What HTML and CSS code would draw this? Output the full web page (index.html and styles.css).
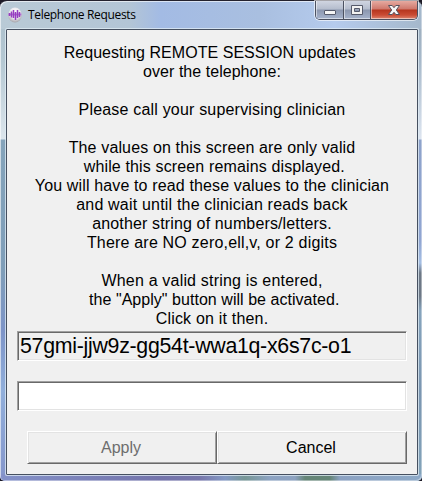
FILE: index.html
```
<!DOCTYPE html>
<html lang="en">
<head>
    <meta charset="UTF-8">
    <meta name="viewport" content="width=device-width, initial-scale=1.0">
    <title>Telephone Requests</title>
    <link rel="stylesheet" href="styles.css">
</head>
<body>
    <div class="window">
        <div class="title-bar">
            <svg class="app-icon" width="16" height="16" viewBox="0 0 16 16">
                <defs>
                    <radialGradient id="ball" cx="50%" cy="35%" r="65%">
                        <stop offset="0" stop-color="#ffffff"/>
                        <stop offset="0.6" stop-color="#e9e6ec"/>
                        <stop offset="1" stop-color="#a3a2a8"/>
                    </radialGradient>
                </defs>
                <ellipse cx="8" cy="8" rx="6.8" ry="7.6" fill="url(#ball)"/>
                <path d="M1.500 7.500h13" stroke="#b77dd2" stroke-width="2"/>
                <path d="M2.500 6v3M4.500 4.500v6M6.500 3v8M8.500 5v8M10.500 3v8M12.500 5v5" fill="none" stroke="#963fc0" stroke-width="1.500"/>
            </svg>
            <span class="title">Telephone Requests</span>
            <div class="window-buttons">
                <button class="win-btn minimize" aria-label="Minimize">
                    <svg width="14" height="14" viewBox="0 0 14 14">
                        <rect x="1.500" y="6.500" width="11" height="4" rx=".5" fill="#f5f5f5" stroke="#565a6b"/>
                    </svg>
                </button>
                <button class="win-btn maximize" aria-label="Maximize">
                    <svg width="14" height="14" viewBox="0 0 14 14">
                        <path d="M1.500 1.500h11v9h-11zM4.500 4.500v3h5v-3z" fill="#f2f2f2" fill-rule="evenodd" stroke="#565a6b"/>
                    </svg>
                </button>
                <button class="win-btn close" aria-label="Close">
                    <svg width="14" height="14" viewBox="0 0 14 14">
                        <path d="M1.500 1.500h3.700L7 3.700l1.800-2.200h3.700L9.300 6l3.200 4.500H8.800L7 8.300l-1.800 2.200H1.500L4.700 6z" fill="#f7f7f7" stroke="#55505c"/>
                    </svg>
                </button>
            </div>
        </div>
        <div class="client">
            <p class="message"><span class="tight">Requesting REMOTE SESSION updates </span>
<span class="tight">over the telephone:</span>

<span class="loose">Please call your supervising clinician</span>

The values on this screen are only valid
 while this screen remains displayed.
You will have to read these values to the clinician
<span class="loose">and wait until the clinician reads back</span>
another string of numbers/letters.
<span class="loose">There are NO zero,ell,v, or 2 digits</span>

<span class="loose">When a valid string is entered,</span>
<span class="tight"> the "Apply" button will be activated.</span>
<span class="loose">Click on it then.</span></p>
            <div class="field code">57gmi-jjw9z-gg54t-wwa1q-x6s7c-o1</div>
            <input class="field entry" type="text" aria-label="Reply string">
            <div class="actions">
                <button class="btn" disabled>Apply</button>
                <button class="btn">Cancel</button>
            </div>
        </div>
    </div>
</body>
</html>
```
FILE: styles.css
```
* {
    box-sizing: border-box;
}

body {
    margin: 0;
    background-color: #1d1b27;
    font-family: "Liberation Sans", Arial, sans-serif;
    overflow: hidden;
}

.window {
    width: 422px;
    height: 481px;
    padding: 0 4px 5px 6px;
    border-top: 1px solid #24222e;
    border-radius: 7px 7px 5px 5px;
    background:
        linear-gradient(90deg, #b9cad6 0, #b3c5d6 130px, #a3bbe4 160px, #a9bfe0 260px, #b5cbed 335px, #a5b8cb 100%) 0 0 / 100% 28px no-repeat,
        linear-gradient(90deg, #8492c9 0, #7474ab 160px, #7777ab 200px, #8499c4 225px, #779796 245px, #8da3c2 270px, #8da2c0 295px, #668678 305px, #668678 330px, #8ca2c2 340px, #8da9c7 100%) 0 100% / 100% 7px no-repeat,
        linear-gradient(#a9bdca 0, #b5c8d3 60px, #dce5ec 138px, #85a4bb 139px, #7f9eb9 270px, #7d94c8 330px, #91afdb 390px, #8495cb 100%) 0 0 / 7px 100% no-repeat,
        linear-gradient(#98a9b8 0, #a8bacb 60px, #dde5f0 138px, #8ea3cb 139px, #91a6d2 240px, #a5bfe4 262px, #6d7886 272px, #6d7886 295px, #86a4bd 310px, #7b96b1 390px, #83a4ba 100%) 100% 0 / 6px 100% no-repeat;
    box-shadow: inset 1px 1px 0 rgba(255, 255, 255, 0.6), inset -1px -1px 0 rgba(255, 255, 255, 0.4);
}

.title-bar {
    display: flex;
    align-items: flex-start;
    height: 28px;
    padding-left: 1px;
}

.app-icon {
    margin-top: 6px;
}

.title {
    margin: 5px 0 0 5px;
    font-family: "Open Sans", "Noto Sans", sans-serif;
    font-size: 12px;
    line-height: 17px;
    letter-spacing: -0.33px;
    color: #000;
    white-space: nowrap;
}

.window-buttons {
    display: flex;
    height: 19px;
    margin-left: auto;
    border: 1px solid #4c5161;
    border-top: 0;
    border-radius: 0 0 5px 5px;
    box-shadow: 0 0 0 1px rgba(255, 255, 255, 0.6);
    overflow: hidden;
}

.win-btn {
    display: flex;
    justify-content: center;
    width: 27px;
    padding: 3px 0 0;
    border: 0;
    border-right: 1px solid #4c5161;
    background: linear-gradient(#d0d5e1 0, #b5bdcd 8px, #8c97af 9px, #a6b3cc 100%);
    box-shadow: inset 1px -1px 0 rgba(255, 255, 255, 0.5);
}

.win-btn svg {
    flex-shrink: 0;
}

.win-btn.minimize {
    width: 28px;
}

.win-btn.close {
    width: 46px;
    border-right: 0;
    background: linear-gradient(#e6aaa0 0, #cf786c 8px, #b6351e 9px, #ca4c34 14px, #dd8670 100%);
}

.client {
    display: flex;
    flex-direction: column;
    height: 446px;
    padding: 13px 10px 0;
    border: 1px solid #465060;
    border-radius: 1px;
    background-color: #f0f0f0;
    box-shadow: 0 0 0 1px rgba(225, 237, 245, 0.75);
}

.message {
    height: 285px;
    margin: 0;
    font-size: 16px;
    line-height: 19px;
    letter-spacing: 0.14px;
    text-align: center;
    white-space: pre;
    color: #000;
}

.tight {
    letter-spacing: 0.04px;
}

.loose {
    letter-spacing: 0.19px;
}

/* sunken boxes */
.field {
    width: 390px;
    height: 30px;
    padding: 0 2px;
    border: 1px solid;
    border-color: #a0a0a0 #fff #fff #a0a0a0;
    box-shadow: inset 1px 1px 0 #696969, inset -1px -1px 0 #e3e3e3;
    font-family: inherit;
    font-size: 21.33px;
    line-height: 28px;
    white-space: nowrap;
}

.code {
    margin-top: 3px;
    background-color: #f0f0f0;
    letter-spacing: -0.28px;
}

.entry {
    margin-top: 20px;
    background-color: #fff;
    outline: 0;
}

.actions {
    display: flex;
    margin: 20px 0 0 10px;
}

/* raised buttons */
.btn {
    width: 190px;
    height: 33px;
    padding: 0 2px 0 0;
    border: 1px solid;
    border-color: #fff #696969 #696969 #fff;
    border-radius: 0;
    background-color: #f0f0f0;
    box-shadow: inset 1px 1px 0 #e3e3e3, inset -1px -1px 0 #a0a0a0;
    font-family: inherit;
    font-size: 16px;
    color: #000;
}

.btn:disabled {
    color: #6d6d6d;
}
```
